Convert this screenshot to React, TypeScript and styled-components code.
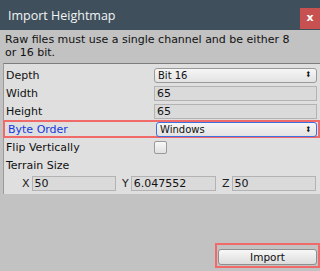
import { FC, ReactNode } from "react";
import styled, { createGlobalStyle } from "styled-components";

const GlobalStyle = createGlobalStyle`
  html, body {
    margin: 0;
    padding: 0;
    background: #c2c2c2;
  }
  body {
    font-family: "DejaVu Sans", Verdana, sans-serif;
  }
`;

const Window = styled.div`
  width: 320px;
  height: 271px;
  background: #c2c2c2;
  display: flex;
  flex-direction: column;
  overflow: hidden;
`;

const TitleBar = styled.header`
  height: 30px;
  background: #3f505c;
  display: flex;
  align-items: center;
  justify-content: space-between;
  padding-left: 8px;
`;

const Title = styled.span`
  font-family: "Open Sans", "Noto Sans", sans-serif;
  font-size: 12.5px;
  color: #f2f4f5;
`;

const CloseButton = styled.button`
  width: 20px;
  height: 21px;
  margin-top: 6px;
  background: #c75050;
  border: none;
  color: #fff;
  font-family: "DejaVu Sans", sans-serif;
  font-size: 11px;
  font-weight: bold;
  padding: 0 0 2px;
  line-height: 1;
`;

const Message = styled.p`
  margin: 0;
  padding: 3px 18px 4px 5px;
  font-size: 11px;
  line-height: 13px;
  color: #111;
`;

const Panel = styled.section`
  margin: 0 0 0 3px;
  background: #dfdfdf;
  border-top: 1px solid #7d7d7d;
  border-left: 1px solid #9a9a9a;
  display: flex;
  flex-direction: column;
  padding: 2px 0 2px;
`;

const Row = styled.div<{ $highlight?: boolean }>`
  display: grid;
  grid-template-columns: 148px 1fr;
  align-items: center;
  height: ${(p) => (p.$highlight ? "14px" : "18px")};
  border: ${(p) => (p.$highlight ? "2px solid #f06a6a" : "none")};
  margin-left: ${(p) => (p.$highlight ? "-1px" : "0")};
  padding-left: ${(p) => (p.$highlight ? "3px" : "2px")};
  padding-right: ${(p) => (p.$highlight ? "1px" : "3px")};
`;

const Label = styled.span<{ $active?: boolean }>`
  font-size: 11px;
  color: ${(p) => (p.$active ? "#1439e0" : "#111")};
  white-space: nowrap;
`;

const Dropdown = styled.div<{ $focused?: boolean }>`
  height: 13px;
  border: 1px solid ${(p) => (p.$focused ? "#3f6fe0" : "#9a9a9a")};
  border-radius: 3px;
  background: linear-gradient(#f6f6f6, #e2e2e2);
  display: flex;
  align-items: center;
  justify-content: space-between;
  padding: 0 4px 0 3px;
  font-size: 10px;
  color: #111;
`;

const Arrows = styled.span`
  font-size: 8px;
  line-height: 1;
  transform: scaleX(0.8);
`;

const Field = styled.div`
  height: 13px;
  border: 1px solid #b3b3b3;
  background: #dadada;
  font-size: 11px;
  line-height: 13px;
  padding-left: 2px;
  color: #111;
`;

const Checkbox = styled.div`
  width: 11px;
  height: 11px;
  border: 1px solid #9a9a9a;
  border-radius: 2px;
  background: linear-gradient(#f8f8f8, #e0e0e0);
`;

const VectorRow = styled.div`
  display: grid;
  grid-template-columns: repeat(3, 1fr);
  column-gap: 6px;
  height: 18px;
  align-items: center;
  padding: 0 4px 0 18px;
`;

const Axis = styled.div`
  display: flex;
  align-items: center;
  gap: 2px;
  font-size: 11px;
  color: #222;
`;

const AxisField = styled(Field)`
  flex: 1;
`;

const Spacer = styled.div`
  flex: 1;
`;

const Footer = styled.footer`
  display: flex;
  justify-content: flex-end;
  padding: 0 0 3px;
`;

const ButtonFrame = styled.div`
  border: 2px solid #f06a6a;
  padding: 1px;
`;

const Button = styled.button`
  width: 99px;
  height: 16px;
  border: 1px solid #8e8e8e;
  border-radius: 3px;
  background: linear-gradient(#f8f8f8, #dcdcdc);
  font-family: "DejaVu Sans", Verdana, sans-serif;
  font-size: 10.5px;
  color: #111;
  padding: 0;
  line-height: 14px;
`;

const PropRow: FC<{ label: string; children?: ReactNode; highlight?: boolean }> = ({
  label,
  children,
  highlight,
}) => (
  <Row $highlight={highlight}>
    <Label $active={highlight}>{label}</Label>
    {children}
  </Row>
);

const axes = [
  { name: "X", value: "50" },
  { name: "Y", value: "6.047552" },
  { name: "Z", value: "50" },
];

export default function App() {
  return (
    <Window>
      <GlobalStyle />
      <TitleBar>
        <Title>Import Heightmap</Title>
        <CloseButton>x</CloseButton>
      </TitleBar>
      <Message>
        Raw files must use a single channel and be either 8 or 16 bit.
      </Message>
      <Panel>
        <PropRow label="Depth">
          <Dropdown>
            Bit 16<Arrows>⬍</Arrows>
          </Dropdown>
        </PropRow>
        <PropRow label="Width">
          <Field>65</Field>
        </PropRow>
        <PropRow label="Height">
          <Field>65</Field>
        </PropRow>
        <PropRow label="Byte Order" highlight>
          <Dropdown $focused>
            Windows<Arrows>⬍</Arrows>
          </Dropdown>
        </PropRow>
        <PropRow label="Flip Vertically">
          <Checkbox />
        </PropRow>
        <PropRow label="Terrain Size" />
        <VectorRow>
          {axes.map((a) => (
            <Axis key={a.name}>
              {a.name}
              <AxisField>{a.value}</AxisField>
            </Axis>
          ))}
        </VectorRow>
      </Panel>
      <Spacer />
      <Footer>
        <ButtonFrame>
          <Button>Import</Button>
        </ButtonFrame>
      </Footer>
    </Window>
  );
}
